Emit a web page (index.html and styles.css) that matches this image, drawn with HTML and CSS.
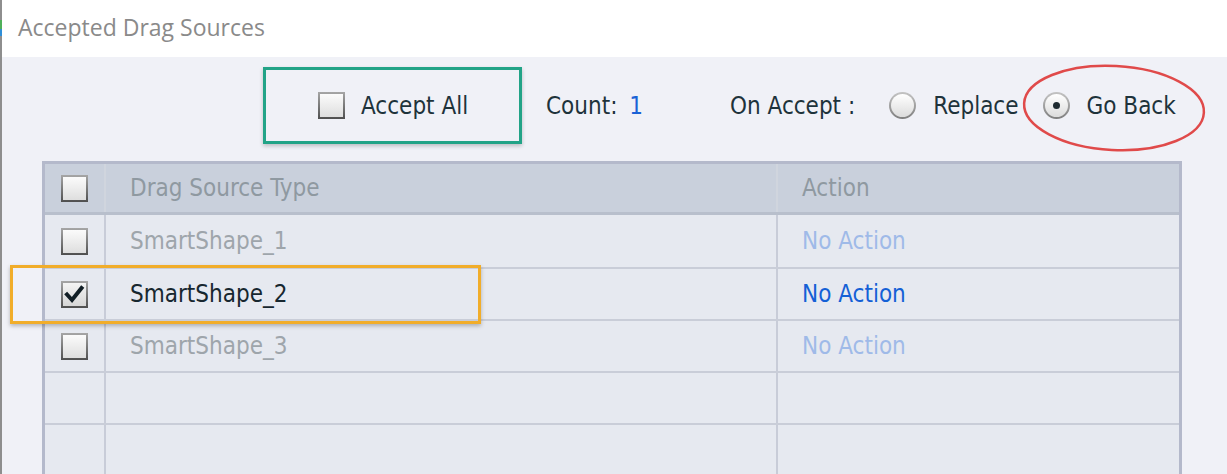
FILE: index.html
```html
<!DOCTYPE html>
<html lang="en">
<head>
<meta charset="utf-8">
<title>Accepted Drag Sources</title>
<link rel="stylesheet" href="styles.css">
</head>
<body>
<div class="window">
  <div class="titlebar">Accepted Drag Sources</div>
  <div class="content">
    <div class="toolbar">
      <div class="accept-all">
        <span class="cb"></span>
        <span class="label">Accept All</span>
      </div>
      <span class="count">Count: <span class="num">1</span></span>
      <span class="on-accept">On Accept :</span>
      <span class="radio"></span>
      <span class="opt">Replace</span>
      <span class="radio on"></span>
      <span class="opt">Go Back</span>
      <svg class="ring" width="190" height="96" viewBox="0 0 190 96">
        <ellipse cx="95" cy="48" rx="90" ry="42" transform="rotate(3 95 48)" fill="none" stroke="#e04a4a" stroke-width="2.5"/>
      </svg>
    </div>
    <div class="table">
      <div class="hrow">
        <div class="cell c1"><span class="cb"></span></div>
        <div class="cell c2">Drag Source Type</div>
        <div class="cell c3">Action</div>
      </div>
      <div class="row dim">
        <div class="cell c1"><span class="cb"></span></div>
        <div class="cell c2">SmartShape_1</div>
        <div class="cell c3 act">No Action</div>
      </div>
      <div class="row active">
        <div class="cell c1"><span class="cb checked"><svg width="23" height="23" viewBox="0 0 23 23"><path d="M4 11.5 L9 17 L18.5 5" fill="none" stroke="#111e25" stroke-width="4" stroke-linecap="square" stroke-linejoin="miter"/></svg></span></div>
        <div class="cell c2">SmartShape_2</div>
        <div class="cell c3 act">No Action</div>
      </div>
      <div class="row dim">
        <div class="cell c1"><span class="cb"></span></div>
        <div class="cell c2">SmartShape_3</div>
        <div class="cell c3 act">No Action</div>
      </div>
      <div class="row">
        <div class="cell c1"></div>
        <div class="cell c2"></div>
        <div class="cell c3"></div>
      </div>
      <div class="row">
        <div class="cell c1"></div>
        <div class="cell c2"></div>
        <div class="cell c3"></div>
      </div>
      <div class="highlight"></div>
    </div>
  </div>
</div>
</body>
</html>
```
FILE: styles.css
```css
html, body {
  margin: 0;
  padding: 0;
}
body {
  width: 1227px;
  height: 474px;
  overflow: hidden;
  background: #f0f1f7;
  font-family: "DejaVu Sans Condensed", "DejaVu Sans", sans-serif;
  font-stretch: condensed;
  font-size: 24px;
  color: #1e333b;
}
.window {
  position: relative;
  height: 474px;
  box-sizing: border-box;
  border-left: 2px solid #8e8e8e;
}
.titlebar {
  position: relative;
  height: 57px;
  box-sizing: border-box;
  background: #ffffff;
  display: flex;
  align-items: center;
  padding-left: 16px;
  padding-bottom: 3px;
  font-family: "Open Sans", sans-serif;
  font-stretch: normal;
  font-size: 23px;
  color: #8a8a8a;
}
.titlebar::before {
  content: "";
  position: absolute;
  left: -2px;
  top: 20px;
  width: 2px;
  height: 16px;
  background: linear-gradient(#4fb05a 0%, #4fb05a 55%, #2f8fd8 60%, #2f8fd8 100%);
}
.content {
  background: #f0f1f7;
}
.toolbar {
  position: relative;
  display: flex;
  align-items: center;
  height: 104px;
  box-sizing: border-box;
  padding-top: 10px;
  padding-bottom: 17px;
}
.accept-all {
  margin-left: 261px;
  width: 259px;
  height: 77px;
  box-sizing: border-box;
  border: 3px solid #22a387;
  box-shadow: 0 2px 4px rgba(0, 0, 0, 0.22);
  display: flex;
  align-items: center;
  padding-left: 52px;
  gap: 16px;
}
.cb {
  display: inline-flex;
  align-items: center;
  justify-content: center;
  width: 27px;
  height: 27px;
  box-sizing: border-box;
  border: 2px solid transparent;
  background:
    linear-gradient(#fbfbfb, #dedede) padding-box,
    linear-gradient(#a6a6a6, #4f4f4f) border-box;
  flex: none;
}
.cb.checked {
  background:
    linear-gradient(#f4f4f4, #d6d6d6) padding-box,
    linear-gradient(#a6a6a6, #4f4f4f) border-box;
}
.count {
  margin-left: 24px;
}
.num {
  color: #1a62d6;
  margin-left: 5px;
}
.on-accept {
  margin-left: 87px;
}
.radio {
  position: relative;
  width: 27px;
  height: 27px;
  box-sizing: border-box;
  border-radius: 50%;
  border: 2px solid transparent;
  background:
    linear-gradient(#ffffff, #dcdcdc) padding-box,
    linear-gradient(#c4c4c4, #7e7e7e) border-box;
  flex: none;
  margin-left: 34px;
  margin-right: 17px;
}
.radio.on {
  margin-left: 24px;
}
.radio.on::after {
  content: "";
  position: absolute;
  left: 50%;
  top: 50%;
  width: 7px;
  height: 7px;
  margin: -3.5px 0 0 -3.5px;
  border-radius: 50%;
  background: #1e2a30;
}
.ring {
  position: absolute;
  left: 1017px;
  top: 3px;
}
.table {
  position: relative;
  margin-left: 40px;
  width: 1140px;
  box-sizing: border-box;
  border: 3px solid #b4b9cb;
  border-bottom: none;
  background: #e6e9f0;
}
.hrow, .row {
  display: grid;
  grid-template-columns: 61px 672px 1fr;
}
.hrow {
  height: 51px;
  box-sizing: border-box;
  background: #c9d0dc;
  border-bottom: 3px solid #b8bfcc;
  color: #8f99a1;
}
.row {
  height: 52px;
  box-sizing: border-box;
}
.row + .row {
  border-top: 2px solid #c9cdd8;
}
.cell {
  display: flex;
  align-items: center;
  box-sizing: border-box;
}
.c1 {
  justify-content: center;
  border-right: 2px solid #c8ccd8;
}
.c2 {
  padding-left: 24px;
  border-right: 2px solid #c8ccd8;
}
.c3 {
  padding-left: 24px;
}
.hrow .c1, .hrow .c2 {
  border-right-color: #d0d5de;
}
.row.dim .c2 {
  color: #9ea5ab;
}
.row.dim .act {
  color: #9fbae8;
}
.row.active .c2 {
  color: #17272f;
}
.row.active .act {
  color: #1460d6;
}
.highlight {
  position: absolute;
  left: -35px;
  top: 101px;
  width: 471px;
  height: 59px;
  box-sizing: border-box;
  border: 3px solid #f1ad2a;
  box-shadow: 0 2px 4px rgba(0, 0, 0, 0.25);
}
```
